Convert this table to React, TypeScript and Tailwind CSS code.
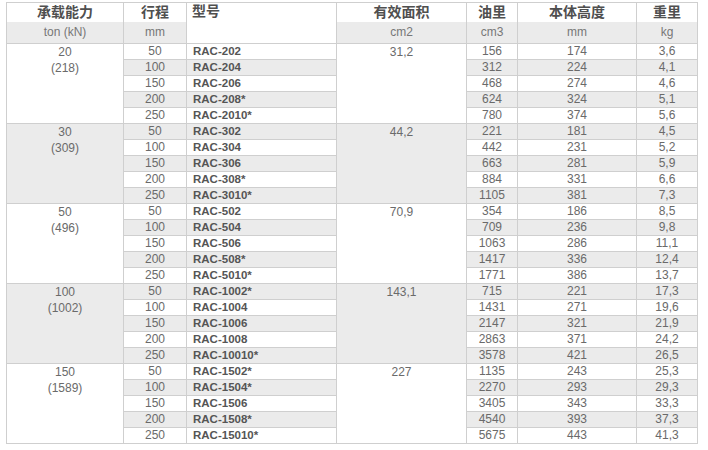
import React from "react";

type Row = [string, string, string, string, string];
type Group = { load: string; kn: string; area: string; rows: Row[] };

const groups: Group[] = [
  {
    load: "20",
    kn: "(218)",
    area: "31,2",
    rows: [
      ["50", "RAC-202", "156", "174", "3,6"],
      ["100", "RAC-204", "312", "224", "4,1"],
      ["150", "RAC-206", "468", "274", "4,6"],
      ["200", "RAC-208*", "624", "324", "5,1"],
      ["250", "RAC-2010*", "780", "374", "5,6"],
    ],
  },
  {
    load: "30",
    kn: "(309)",
    area: "44,2",
    rows: [
      ["50", "RAC-302", "221", "181", "4,5"],
      ["100", "RAC-304", "442", "231", "5,2"],
      ["150", "RAC-306", "663", "281", "5,9"],
      ["200", "RAC-308*", "884", "331", "6,6"],
      ["250", "RAC-3010*", "1105", "381", "7,3"],
    ],
  },
  {
    load: "50",
    kn: "(496)",
    area: "70,9",
    rows: [
      ["50", "RAC-502", "354", "186", "8,5"],
      ["100", "RAC-504", "709", "236", "9,8"],
      ["150", "RAC-506", "1063", "286", "11,1"],
      ["200", "RAC-508*", "1417", "336", "12,4"],
      ["250", "RAC-5010*", "1771", "386", "13,7"],
    ],
  },
  {
    load: "100",
    kn: "(1002)",
    area: "143,1",
    rows: [
      ["50", "RAC-1002*", "715", "221", "17,3"],
      ["100", "RAC-1004", "1431", "271", "19,6"],
      ["150", "RAC-1006", "2147", "321", "21,9"],
      ["200", "RAC-1008", "2863", "371", "24,2"],
      ["250", "RAC-10010*", "3578", "421", "26,5"],
    ],
  },
  {
    load: "150",
    kn: "(1589)",
    area: "227",
    rows: [
      ["50", "RAC-1502*", "1135", "243", "25,3"],
      ["100", "RAC-1504*", "2270", "293", "29,3"],
      ["150", "RAC-1506", "3405", "343", "33,3"],
      ["200", "RAC-1508*", "4540", "393", "37,3"],
      ["250", "RAC-15010*", "5675", "443", "41,3"],
    ],
  },
];

const cell = "border-r border-b border-[#cfcfcf] p-0";
const head = "border-r border-[#cfcfcf] p-0 h-[19px] text-[14px] font-bold text-[#4f4f4f] leading-[19px] text-center align-middle";
const unit = "border-r border-b border-[#cfcfcf] p-0 h-[21px] bg-[#ebebeb] text-[12px] text-[#777] leading-[21px] text-center align-middle";

export default function App() {
  let index = 0;

  return (
    <div className="min-h-[450px] bg-white pt-[2px] pl-[6px] font-['Liberation_Sans','Noto_Sans_CJK_SC',sans-serif]">
      <table className="table-fixed border-separate border-spacing-0 border-l border-t border-[#cfcfcf] w-[692px]">
        <colgroup>
          <col className="w-[117px]" />
          <col className="w-[63px]" />
          <col className="w-[150px]" />
          <col className="w-[130px]" />
          <col className="w-[51px]" />
          <col className="w-[119px]" />
          <col className="w-[61px]" />
        </colgroup>
        <thead>
          <tr>
            <th className={head}>承载能力</th>
            <th className={head}>行程</th>
            <th
              rowSpan={2}
              className="border-r border-b border-[#cfcfcf] p-0 pl-[5px] text-left align-top text-[14px] font-bold leading-[17px] text-[#4f4f4f]"
            >
              型号
            </th>
            <th className={head}>有效面积</th>
            <th className={head}>油里</th>
            <th className={head}>本体高度</th>
            <th className={head}>重里</th>
          </tr>
          <tr>
            <td className={unit}>ton (kN)</td>
            <td className={unit}>mm</td>
            <td className={unit}>cm2</td>
            <td className={unit}>cm3</td>
            <td className={unit}>mm</td>
            <td className={unit}>kg</td>
          </tr>
        </thead>
        <tbody className="text-[12px] leading-[15px] text-[#6a6a6a]">
          {groups.map((g) =>
            g.rows.map((r, i) => {
              const gray = index++ % 2 === 1;
              const bg = gray ? "bg-[#ebebeb]" : "bg-white";
              return (
                <tr key={g.load + r[0]} className={bg}>
                  {i === 0 && (
                    <td rowSpan={5} className={`${cell} text-center align-top leading-[16px]`}>
                      {g.load}
                      <br />
                      {g.kn}
                    </td>
                  )}
                  <td className={`${cell} h-[15px] text-center`}>{r[0]}</td>
                  <td className={`${cell} pl-[6px] text-left text-[11.5px] font-bold text-[#555]`}>{r[1]}</td>
                  {i === 0 && (
                    <td rowSpan={5} className={`${cell} text-center align-top leading-[16px]`}>
                      {g.area}
                    </td>
                  )}
                  <td className={`${cell} text-center`}>{r[2]}</td>
                  <td className={`${cell} text-center`}>{r[3]}</td>
                  <td className={`${cell} text-center`}>{r[4]}</td>
                </tr>
              );
            })
          )}
        </tbody>
      </table>
    </div>
  );
}
